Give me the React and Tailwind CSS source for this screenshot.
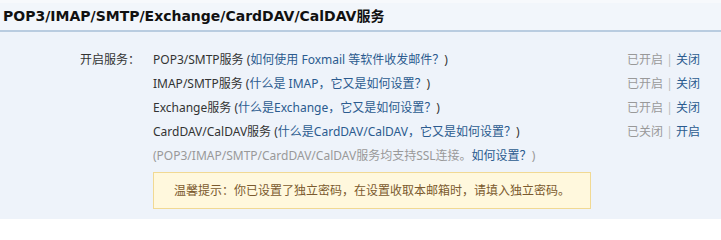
import React from 'react';

const services = [
  { name: 'POP3/SMTP服务', help: '如何使用 Foxmail 等软件收发邮件？', on: true },
  { name: 'IMAP/SMTP服务', help: '什么是 IMAP，它又是如何设置？', on: true },
  { name: 'Exchange服务', help: '什么是Exchange，它又是如何设置？', on: true },
  { name: 'CardDAV/CalDAV服务', help: '什么是CardDAV/CalDAV，它又是如何设置？', on: false },
];

const ServiceRow = ({ name, help, on }) => (
  <div className="flex h-[24px] items-center justify-between">
    <div className="text-[#333]">
      {name} (<a href="#" className="text-[#2b5b8f]">{help}</a>)
    </div>
    <div className="text-[#999]">
      {on ? '已开启' : '已关闭'} <span className="text-[#bbb]">|</span>{' '}
      <a href="#" className="text-[#2b5b8f]">{on ? '关闭' : '开启'}</a>
    </div>
  </div>
);

const App = () => {
  return (
    <div className="h-[219px] w-[721px] bg-[#eef3fa] font-['Noto_Sans','Noto_Sans_CJK_SC',sans-serif] text-[12px]">
      <div className="border-t-[3px] border-[#f7f9fc]">
        <div className="flex h-[29px] items-center border-b-2 border-[#b9cce0] bg-[#f2f6fb] pl-[3px]">
          <h2 className="font-['DejaVu_Sans','Noto_Sans_CJK_SC',sans-serif] text-[14px] font-bold text-[#111]">
            POP3/IMAP/SMTP/Exchange/CardDAV/CalDAV服务
          </h2>
        </div>
      </div>
      <div className="flex pt-[16px]">
        <div className="w-[140px] text-right leading-[24px] text-[#333]">开启服务：</div>
        <div className="ml-[13px] flex-1 pr-[21px]">
          {services.map((s) => (
            <ServiceRow key={s.name} {...s} />
          ))}
          <div className="flex h-[24px] items-center text-[#999]">
            (POP3/IMAP/SMTP/CardDAV/CalDAV服务均支持SSL连接。
            <a href="#" className="text-[#2b5b8f]">如何设置？</a>)
          </div>
          <div className="mt-[4px] flex h-[37px] w-[438px] items-center border border-[#f1d993] bg-[#fff8dd] pl-[20px] text-[#7b5a2e]">
            温馨提示：你已设置了独立密码，在设置收取本邮箱时，请填入独立密码。
          </div>
        </div>
      </div>
    </div>
  );
};

export default App;
